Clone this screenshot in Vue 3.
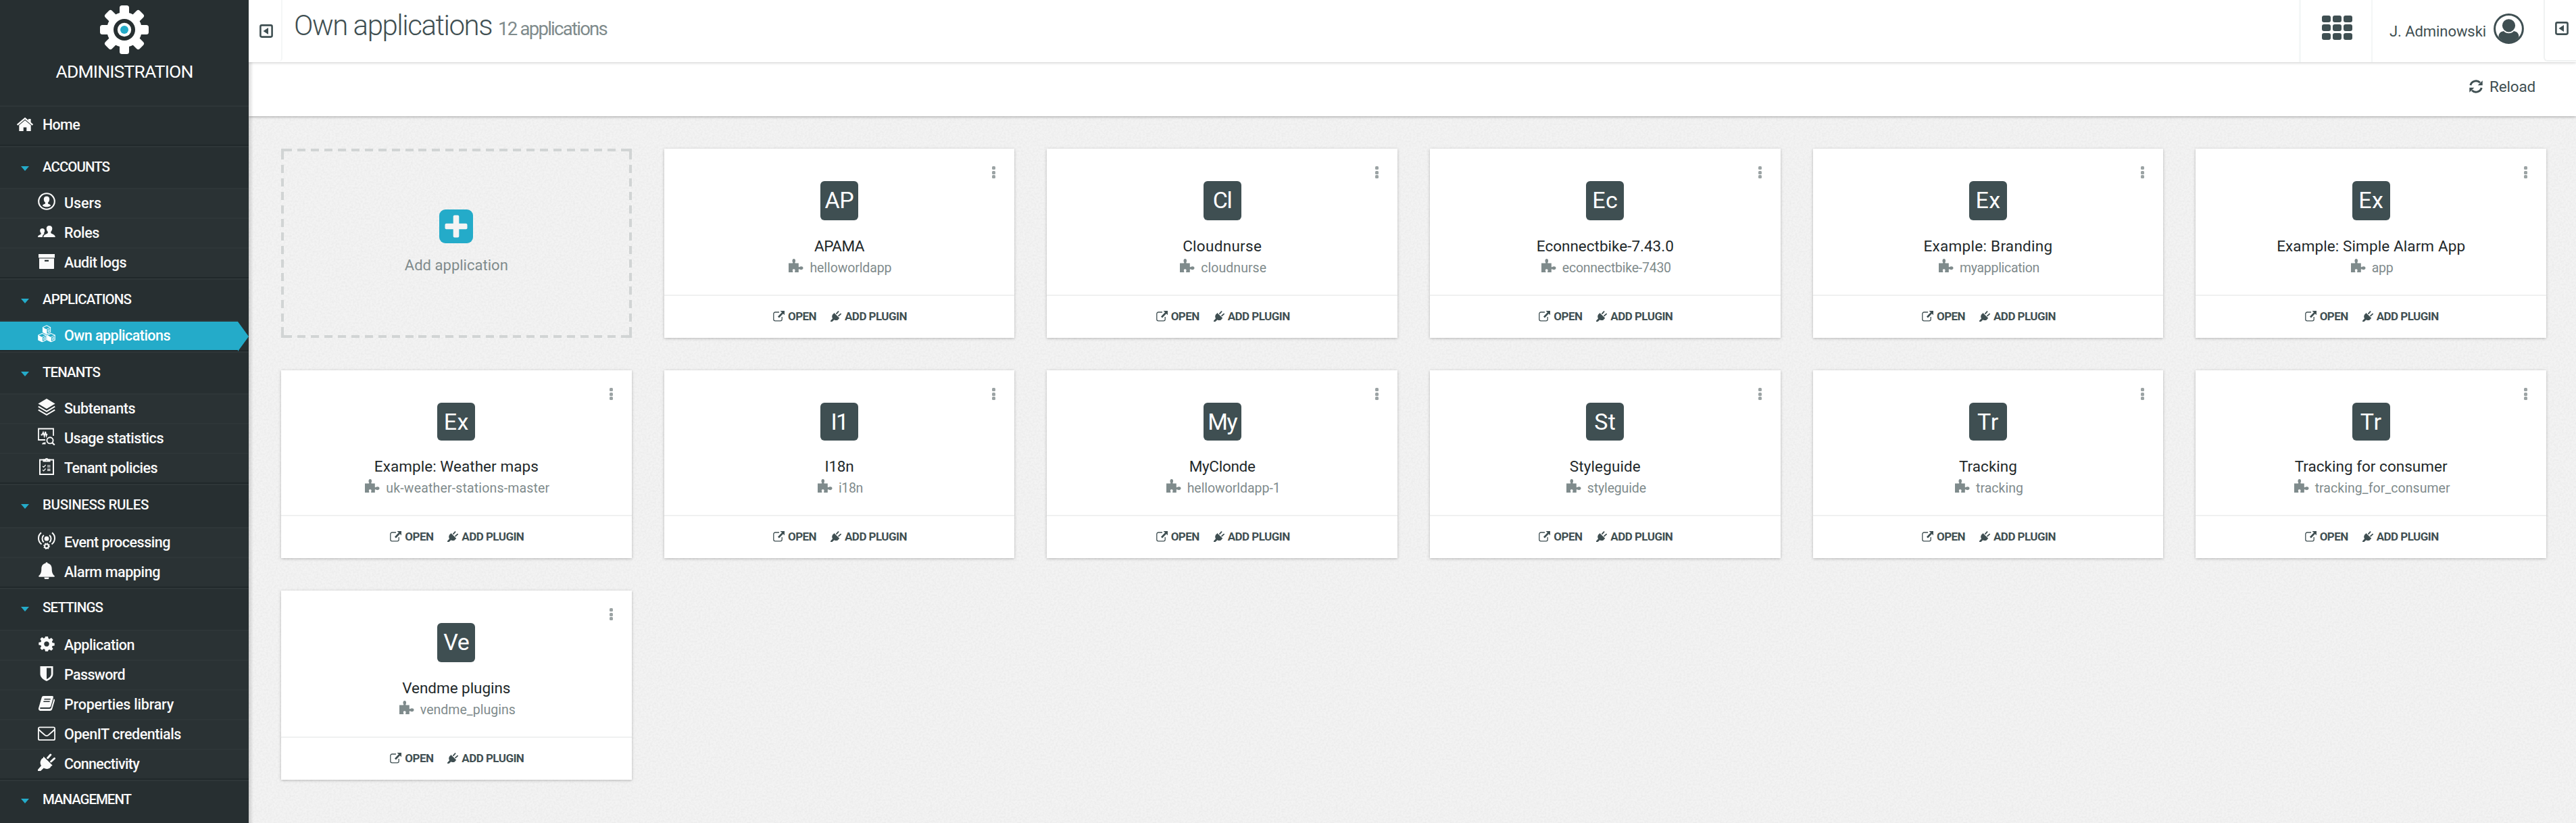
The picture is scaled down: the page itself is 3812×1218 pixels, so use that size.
<script setup>
const vFit = {
  mounted(el, { value }) {
    const natural = el.getBoundingClientRect().width
    const gaps = el.textContent.trim().length
    el.style.letterSpacing = (value - natural) / gaps + 'px'
  },
}

const sections = [
  {
    title: 'ACCOUNTS', width: 99,
    items: [
      { label: 'Users', icon: 'user', width: 55 },
      { label: 'Roles', icon: 'roles', width: 52 },
      { label: 'Audit logs', icon: 'archive', width: 92 },
    ],
  },
  { title: 'APPLICATIONS', width: 131, items: [{ label: 'Own applications', icon: 'cubes', width: 157, active: true }] },
  {
    title: 'TENANTS', width: 85,
    items: [
      { label: 'Subtenants', icon: 'layers', width: 105 },
      { label: 'Usage statistics', icon: 'stats', width: 147 },
      { label: 'Tenant policies', icon: 'policies', width: 138 },
    ],
  },
  {
    title: 'BUSINESS RULES', width: 157, tall: true,
    items: [
      { label: 'Event processing', icon: 'event', width: 157 },
      { label: 'Alarm mapping', icon: 'bell', width: 142 },
    ],
  },
  {
    title: 'SETTINGS', width: 89, raised: true,
    items: [
      { label: 'Application', icon: 'gear', width: 104 },
      { label: 'Password', icon: 'shield', width: 90 },
      { label: 'Properties library', icon: 'book', width: 162 },
      { label: 'OpenIT credentials', icon: 'mail', width: 173 },
      { label: 'Connectivity', icon: 'plug', width: 111 },
    ],
  },
  { title: 'MANAGEMENT', width: 131, raised: true, items: [] },
]

const apps = [
  { short: 'AP', sw: 43, name: 'APAMA', nw: 74, path: 'helloworldapp', pw: 121 },
  { short: 'Cl', sw: 28, name: 'Cloudnurse', nw: 117, path: 'cloudnurse', pw: 97 },
  { short: 'Ec', sw: 38, name: 'Econnectbike-7.43.0', nw: 203, path: 'econnectbike-7430', pw: 161 },
  { short: 'Ex', sw: 37, name: 'Example: Branding', nw: 191, path: 'myapplication', pw: 118 },
  { short: 'Ex', sw: 37, name: 'Example: Simple Alarm App', nw: 279, path: 'app', pw: 32 },
  { short: 'Ex', sw: 37, name: 'Example: Weather maps', nw: 243, path: 'uk-weather-stations-master', pw: 242 },
  { short: 'I1', sw: 25, name: 'I18n', nw: 43, path: 'i18n', pw: 36 },
  { short: 'My', sw: 43, name: 'MyClonde', nw: 98, path: 'helloworldapp-1', pw: 138 },
  { short: 'St', sw: 32, name: 'Styleguide', nw: 105, path: 'styleguide', pw: 87 },
  { short: 'Tr', sw: 32, name: 'Tracking', nw: 86, path: 'tracking', pw: 70 },
  { short: 'Tr', sw: 32, name: 'Tracking for consumer', nw: 226, path: 'tracking_for_consumer', pw: 200 },
  { short: 'Ve', sw: 38, name: 'Vendme plugins', nw: 160, path: 'vendme_plugins', pw: 141 },
]
</script>

<template>
  <div class="page">
    <svg class="defs" width="0" height="0">
      <symbol id="home" viewBox="0 0 26 26">
        <path d="M1.6 13.8 13 4.2l11.4 9.6" fill="none" stroke="currentColor" stroke-width="2.4" />
        <path d="M18 5h3.600v7L18 8.600zM4.300 14.200 13 7l8.700 7.200V23h-6.400v-5.600h-4.600V23H4.300z" fill="currentColor" />
      </symbol>
      <symbol id="user" viewBox="0 0 26 26">
        <circle cx="13" cy="13" r="11.8" fill="none" stroke="currentColor" stroke-width="2.100" />
        <path d="M13 5.500c-2.900 0-4.400 1.900-4.200 4.600.1 2.300 1 3.900 2.200 4.700v1.400c-.3 1-3.900.8-4 3.300 1.300 1.200 3.400 1.800 6 1.800s4.700-.6 6-1.800c-.1-2.500-3.700-2.300-4-3.300v-1.400c1.200-.8 2.100-2.400 2.200-4.700.2-2.700-1.300-4.600-4.200-4.600z" fill="currentColor" />
      </symbol>
      <symbol id="roles" viewBox="0 0 26 26">
        <path d="M17 5c-2.900 0-4.300 1.700-4.200 4.300.1 2 .9 3.600 2 4.600v1.500C14.300 17.600 8.400 17 8.300 22h17.500c-.1-5-6-4.400-6.500-6.600v-1.500c1.100-1 1.900-2.600 2-4.600C21.400 6.700 19.900 5 17 5z" fill="currentColor" />
        <path d="M6.600 9c-2.300 0-3.500 1.400-3.400 3.500.1 1.500.6 2.700 1.500 3.500v1.200C4 18.800 0 18.400 0 22h6.700c.1-2.600 1.500-4.100 3.300-5-.9-.3-1.100-.6-1.200-1 1-1 1.300-2 1.300-3.500C10.200 10.400 8.900 9 6.600 9z" fill="currentColor" />
      </symbol>
      <symbol id="archive" viewBox="0 0 26 26">
        <path d="M1 3h24v5.500H1zM2 9.600h22v14.600a.8.8 0 0 1-.8.8H2.800a.8.8 0 0 1-.8-.8zm8 2.200v2.100h6v-2.100z" fill="currentColor" fill-rule="evenodd" />
      </symbol>
      <symbol id="cube" viewBox="0 0 13 14">
        <path d="M6.500.8 12.200 3.500v7L6.500 13.400.8 10.500v-7z" fill="none" stroke="currentColor" stroke-width="1.100" />
        <path d="M.8 3.500 6.500 6.400v7L.8 10.500z" fill="currentColor" />
        <path d="M6.500 6.400 12.200 3.500M6.500 6.400v7M8.600 7.600l2-1v2.600l-2 1z" fill="none" stroke="currentColor" stroke-width=".9" />
      </symbol>
      <symbol id="cubes" viewBox="0 0 26 26">
        <use href="#cube" x="6.500" y="0" width="13" height="14" />
        <use href="#cube" x="0" y="11.600" width="13" height="14" />
        <use href="#cube" x="13" y="11.600" width="13" height="14" />
      </symbol>
      <symbol id="layers" viewBox="0 0 26 26">
        <path d="M13 1 25.600 8.500 13 16 .4 8.500z" fill="currentColor" />
        <path d="M.8 12.600 13 19.800l12.200-7.200M.8 17.600 13 24.800l12.200-7.200" fill="none" stroke="currentColor" stroke-width="2" />
      </symbol>
      <symbol id="stats" viewBox="0 0 26 26">
        <path d="M23 12V1.500H1V18h10M4.500 10.500h1.800l1.600-3.500 1.700 5.500 1.600-6.500L12.600 12l1-3" fill="none" stroke="currentColor" stroke-width="1.800" />
        <path d="M6 24.500c.3-2 2-3 5.500-3V24.500z" fill="currentColor" />
        <circle cx="18" cy="18.800" r="4.600" fill="none" stroke="currentColor" stroke-width="1.900" />
        <path d="m21.300 22.200 3.500 3.400" stroke="currentColor" stroke-width="2.200" />
      </symbol>
      <symbol id="policies" viewBox="0 0 26 26">
        <path d="M3 3.500h20v21.600H3z" fill="none" stroke="currentColor" stroke-width="2" />
        <path d="M7.500 2.500h2.800C11 .4 15 .4 15.700 2.500h2.800v4h-11zM13 2.400a1.300 1.300 0 1 0 .01 0z" fill="currentColor" fill-rule="evenodd" />
        <path d="m7 12.800 1.600 1.600 3-3.400M7 18.300l1.600 1.600 3-3.400M14 12h4.500M14 14h4.500M14 17.400h4.500M14 19.400h4.500" fill="none" stroke="currentColor" stroke-width="1.200" />
      </symbol>
      <symbol id="event" viewBox="0 0 26 26">
        <circle cx="13" cy="10.200" r="3.400" fill="currentColor" />
        <path d="M8.800 15.500a7.200 7.200 0 0 1 0-10.600M17.200 15.500a7.200 7.200 0 0 0 0-10.600M5.500 18.500C-.6 13.500-.2 5.600 5 1.400M20.500 18.500c6.100-5 5.700-12.900.5-17.100" fill="none" stroke="currentColor" stroke-width="2" />
        <circle cx="13" cy="21.200" r="2.900" fill="none" stroke="currentColor" stroke-width="2" />
        <circle cx="13" cy="21.200" r="4.300" fill="none" stroke="currentColor" stroke-width="1.200" stroke-dasharray="1.700 1.680" />
      </symbol>
      <symbol id="bell" viewBox="0 0 26 26">
        <path d="M11.500 2.600a1.500 1.500 0 0 1 3 0c4.300 1 6.200 4.300 6.200 8.400 0 5.500 1.600 8.300 4.300 10.600 0 .8-.6 1.200-1.200 1.200H2.200c-.6 0-1.200-.4-1.200-1.200C3.700 19.300 5.300 16.500 5.300 11c0-4.100 1.900-7.400 6.200-8.400zM9.500 23.600h7a3.500 3.500 0 0 1-7 0z" fill="currentColor" />
      </symbol>
      <symbol id="gear" viewBox="0 0 26 26">
        <path fill="currentColor" fill-rule="evenodd" d="M11 3h4l.6 3.100 1.600.7 2.700-1.700 2.700 2.700-1.700 2.700.7 1.700 3.100.6v3.600l-3.100.6-.7 1.700 1.700 2.600-2.700 2.700-2.700-1.700-1.600.7L15 25h-4l-.6-3-1.700-.7L6.100 23l-2.700-2.700 1.700-2.600-.7-1.700-3.100-.6v-3.600l3.100-.6.7-1.700-1.700-2.700 2.700-2.700 2.600 1.700 1.700-.7zm2 7.200a3.800 3.800 0 1 0 .01 0z" />
      </symbol>
      <symbol id="shield" viewBox="0 0 26 26">
        <path fill="currentColor" fill-rule="evenodd" d="M3.500 3h19v11.500c0 5-5 8.800-9.500 10.500-4.500-1.700-9.500-5.500-9.500-10.500zM13 5.600v16.500c3.500-1.700 6.700-4.300 6.700-7.600V5.600z" />
      </symbol>
      <symbol id="book" viewBox="0 0 26 26">
        <path fill="currentColor" fill-rule="evenodd" d="M8.500 3h12.700c1.400 0 2 .9 1.700 2L19.300 18c-.4 1.300-1.200 1.900-2.600 1.900H4.300c-1.300 0-1.900 1.400-.4 2h13.600c1.300 0 1.900-.5 2.300-1.600L23.600 7.300c1.300.4 1.700 1.400 1.300 2.700l-3.700 12.500c-.4 1.600-1.700 2.500-3.300 2.500H4.200C1.700 25 .4 22.800 1.200 20.500L5.700 5.300C6.200 3.700 7 3 8.500 3zm1.200 4-.5 1.500h9.300L19 7zm-1.100 3.400-.5 1.500h9.300l.5-1.500z" />
      </symbol>
      <symbol id="mail" viewBox="0 0 26 26">
        <rect x=".9" y="5.400" width="24.200" height="18.800" rx="2" fill="none" stroke="currentColor" stroke-width="1.800" />
        <path d="M1 8.500c3 3 6 5.500 9 8.100 2 1.700 4 1.700 6 0 3-2.600 6-5.100 9-8.100" fill="none" stroke="currentColor" stroke-width="1.800" />
      </symbol>
      <symbol id="plug" viewBox="0 0 26 26">
        <path d="M14.600 6.700 18.800 2M19.600 12l4.900-4.500" stroke="currentColor" stroke-width="3" stroke-linecap="round" />
        <path d="M8.600 4.800 21.500 17.600c-.5 1-1 1.300-2 1.300-.6 2.300-2.900 3.800-5.700 4-1.800.1-3.400-.3-4.900-1.400L3 27H0v-3l5-5.700C3.300 15.800 3.200 12.800 4.500 10.200 5.300 8.500 6.400 7.300 8 6.700c-.1-.9.1-1.400.6-1.900z" fill="currentColor" />
      </symbol>
      <symbol id="puzzle" viewBox="0 0 22 20">
        <path fill="currentColor" d="M0 6.500h5.600c.8 0 .9-.6.5-1.200C5 3.500 5.300 0 7.800 0s2.800 3.500 1.700 5.300c-.4.6-.3 1.200.5 1.200h4.800v5c0 .9.6 1.100 1.300.6 2-1.300 5.400-1 5.400 1.700s-3.400 3-5.400 1.700c-.7-.5-1.300-.3-1.300.6v3.900H9.700c-.8 0-.8-.6-.5-1.200.7-1.700.5-3.500-1.500-3.500s-2.200 1.800-1.400 3.500c.3.600.2 1.200-.6 1.200H0z" />
      </symbol>
      <symbol id="external" viewBox="0 0 17 16">
        <path d="M9 2H3.200A2.400 2.400 0 0 0 .8 4.400v8a2.400 2.400 0 0 0 2.400 2.400h7.600a2.400 2.400 0 0 0 2.400-2.400V9" fill="none" stroke="currentColor" stroke-width="1.300" />
        <path d="M10.500 0H17v6.200l-2.100-2-6 6.200-1.900-1.900 6-6.200z" fill="currentColor" />
      </symbol>
      <symbol id="collapse" viewBox="0 0 20 20">
        <rect x="1.400" y="1.400" width="17.200" height="17.200" rx="2" fill="none" stroke="currentColor" stroke-width="2.600" />
        <path d="M13 5v10l-7.500-5z" fill="currentColor" />
      </symbol>
      <symbol id="reload" viewBox="0 0 20 20">
        <path d="M1.800 8.200A8.500 8.500 0 0 1 16 4.300M18.200 11.800A8.500 8.500 0 0 1 4 15.700" fill="none" stroke="currentColor" stroke-width="3" />
        <path d="M19.700 1.300v6.900h-7zM.3 18.700v-6.900h7z" fill="currentColor" />
      </symbol>
    </svg>

    <aside class="sidebar">
      <div class="brand">
        <svg class="brand-icon" viewBox="0 0 72 72">
          <g fill="#fff">
            <rect v-for="a in [0, 45, 90, 135]" :key="a" x="29" y="0" width="14" height="72" rx="3.500" :transform="`rotate(${a} 36 36)`" />
            <circle cx="36" cy="36" r="26" />
          </g>
          <circle cx="36" cy="36" r="16" fill="#272f31" />
          <circle cx="36" cy="36" r="10.200" fill="#fff" />
          <circle cx="36" cy="36" r="6" fill="#24abc9" />
        </svg>
        <div class="brand-name"><span v-fit="203">ADMINISTRATION</span></div>
      </div>
      <div class="home-row">
        <svg class="icon"><use href="#home" /></svg>
        <span v-fit="55">Home</span>
      </div>
      <section v-for="s in sections" :key="s.title" class="section">
        <div class="section-head" :class="{ tall: s.tall, raised: s.raised }">
          <i class="caret"></i><span v-fit="s.width">{{ s.title }}</span>
        </div>
        <div v-for="it in s.items" :key="it.label" class="item" :class="{ active: it.active }">
          <svg class="icon"><use :href="'#' + it.icon" /></svg>
          <span v-fit="it.width">{{ it.label }}</span>
        </div>
      </section>
    </aside>

    <main class="main">
      <header class="topbar">
        <div class="toggle left"><svg class="toggle-icon"><use href="#collapse" /></svg></div>
        <h1 class="title"><span v-fit="293">Own applications</span></h1>
        <div class="count"><span v-fit="161">12 applications</span></div>
        <div class="switcher"><div class="dots"><i v-for="n in 9" :key="n"></i></div></div>
        <div class="account">
          <span v-fit="143">J. Adminowski</span>
          <svg class="avatar" viewBox="0 0 45 45">
            <circle cx="22.500" cy="22.500" r="20.900" fill="none" stroke="currentColor" stroke-width="3" />
            <circle cx="22.500" cy="17.800" r="9.600" fill="currentColor" />
            <path d="M7.500 34.500c0-4.500 2.500-7.800 7.500-8.500 2 2.200 4.600 3.200 7.500 3.200s5.500-1 7.500-3.200c5 .7 7.500 4 7.500 8.500-3.500 5.500-9 8.300-15 8.300s-11.500-2.800-15-8.300z" fill="currentColor" />
          </svg>
        </div>
        <div class="toggle right"><svg class="toggle-icon"><use href="#collapse" /></svg></div>
      </header>
      <div class="actionbar">
        <svg class="reload-icon"><use href="#reload" /></svg>
        <span v-fit="68">Reload</span>
      </div>

      <div class="grid">
        <div class="add-card">
          <svg class="plus" viewBox="0 0 50 50">
            <rect width="50" height="50" rx="9" fill="#24abc9" />
            <rect x="20.700" y="8.500" width="8.600" height="33" rx="2" fill="#f4f4f4" />
            <rect x="8.500" y="20.700" width="33" height="8.600" rx="2" fill="#f4f4f4" />
          </svg>
          <div class="add-label"><span v-fit="153">Add application</span></div>
        </div>
        <article v-for="app in apps" :key="app.name" class="card">
          <div class="kebab"><i></i><i></i><i></i></div>
          <div class="card-body">
            <div class="tile"><span v-fit="app.sw">{{ app.short }}</span></div>
            <div class="name"><span v-fit="app.nw">{{ app.name }}</span></div>
            <div class="path">
              <svg class="puzzle"><use href="#puzzle" /></svg>
              <span v-fit="app.pw">{{ app.path }}</span>
            </div>
          </div>
          <footer class="card-foot">
            <svg class="ext"><use href="#external" /></svg>
            <span class="open" v-fit="42">OPEN</span>
            <svg class="plug"><use href="#plug" /></svg>
            <span v-fit="92">ADD PLUGIN</span>
          </footer>
        </article>
      </div>
    </main>
  </div>
</template>

<style>
body {
  overflow: hidden;
}
</style>

<style scoped>
.page {
  display: flex;
  width: 3812px;
  height: 1218px;
  overflow: hidden;
  font-family: Roboto, "Liberation Sans", sans-serif;
  color: #3f4f52;
  background: #f3f3f3
    url("data:image/svg+xml,%3Csvg xmlns='http://www.w3.org/2000/svg' width='200' height='200'%3E%3Cfilter id='n'%3E%3CfeTurbulence type='fractalNoise' baseFrequency='.35' numOctaves='2' stitchTiles='stitch'/%3E%3CfeColorMatrix values='0 0 0 0 0 0 0 0 0 0 0 0 0 0 0 .06 0 0 0 -.02'/%3E%3C/filter%3E%3Crect width='200' height='200' filter='url(%23n)'/%3E%3C/svg%3E");
}
.page span {
  white-space: nowrap;
}
.defs {
  position: absolute;
}

/* Sidebar */
.sidebar {
  position: relative;
  z-index: 2;
  flex: none;
  width: 368px;
  height: 1218px;
  overflow: hidden;
  background: #272f31;
  color: #fafafa;
}
.brand {
  box-sizing: border-box;
  height: 156px;
  padding-top: 8px;
  text-align: center;
}
.brand-icon {
  display: block;
  width: 72px;
  height: 72px;
  margin: 0 auto;
}
.brand-name {
  margin-top: 9px;
  font-size: 26.500px;
  line-height: 33px;
  color: #fff;
}
.home-row {
  box-sizing: border-box;
  display: flex;
  align-items: center;
  height: 58px;
  padding: 0 0 2px 24px;
  border-top: 2px solid #2e3638;
  font-size: 21.500px;
  font-weight: 500;
  line-height: 52px;
}
.icon {
  flex: none;
  width: 26px;
  height: 26px;
}
.home-row .icon {
  margin: -3px 13px 0 0;
}
.section-head {
  box-sizing: border-box;
  display: flex;
  align-items: center;
  height: 64px;
  padding: 0 0 0 31px;
  border-top: 2px solid #20282a;
  box-shadow: inset 0 2px #2e3638;
  font-size: 20.500px;
  font-weight: 500;
  line-height: 60px;
}
.section-head.tall {
  height: 66px;
  padding-bottom: 2px;
}
.section-head.raised {
  padding-bottom: 4px;
  line-height: 58px;
}
.caret {
  width: 0;
  height: 0;
  margin: 4px 20px 0 0;
  border: 6px solid transparent;
  border-top: 7px solid #24abc9;
  border-bottom: 0;
}
.item {
  box-sizing: border-box;
  display: flex;
  align-items: flex-start;
  height: 44px;
  padding: 5px 0 0 56px;
  border-top: 2px solid #2e3638;
  background: #2a3234;
  font-size: 21.500px;
  font-weight: 500;
  line-height: 32px;
}
.item .icon {
  margin-right: 13px;
}
.item.active {
  position: relative;
  margin-right: 16px;
  background: #24abc9;
  background-clip: padding-box;
  color: #fff;
}
.item.active::after {
  content: "";
  position: absolute;
  left: 100%;
  top: 0;
  width: 16px;
  height: 44px;
  background: #24abc9;
  clip-path: polygon(0 0, 100% 50%, 0 100%);
}

/* Header */
.main {
  position: relative;
  flex: 1;
  min-width: 0;
}
.main::before {
  content: "";
  position: absolute;
  z-index: 1;
  left: 0;
  top: 92px;
  width: 7px;
  height: 1126px;
  background: linear-gradient(90deg, rgba(0, 0, 0, 0.15), rgba(0, 0, 0, 0));
}
.topbar {
  position: relative;
  z-index: 1;
  display: flex;
  height: 92px;
  background: #fff;
  box-shadow: 0 1px 4px rgba(0, 0, 0, 0.2);
}
.toggle {
  box-sizing: border-box;
  width: 50px;
  height: 91px;
  color: #3f4f52;
}
.toggle.left {
  padding: 36px 0 0 16px;
  border-right: 2px solid #f4f6f6;
  border-bottom-right-radius: 5px;
}
.toggle.right {
  width: 48px;
  padding: 32px 0 0 15px;
  border-left: 2px solid #f0f2f2;
  border-bottom: 2px solid #f0f2f2;
  border-bottom-left-radius: 6px;
}
.toggle-icon {
  display: block;
  width: 20px;
  height: 20px;
}
.title {
  margin: 0 0 0 17px;
  font-size: 42px;
  font-weight: 300;
  line-height: 76px;
}
.count {
  margin: 0 auto 0 9px;
  font-size: 27.500px;
  line-height: 85px;
  color: #7f8b8c;
}
.switcher {
  box-sizing: border-box;
  width: 107px;
  padding: 22.500px 0 0 31px;
  border-left: 3px solid #f4f7f7;
}
.dots {
  display: grid;
  grid-template-columns: repeat(3, 13px);
  gap: 3px;
}
.dots i {
  height: 10px;
  border-radius: 3px;
  background: #3f4f52;
}
.account {
  box-sizing: border-box;
  display: flex;
  width: 255px;
  padding-left: 25px;
  border-left: 2px solid #f4f6f6;
  font-size: 22px;
  line-height: 93px;
}
.avatar {
  width: 45px;
  height: 45px;
  margin: 19.500px 0 0 11px;
}
.actionbar {
  display: flex;
  justify-content: flex-end;
  height: 80px;
  padding-right: 60px;
  background: #fff;
  box-shadow: 0 1px 4px rgba(0, 0, 0, 0.32);
  font-size: 22.500px;
  line-height: 73px;
}
.reload-icon {
  width: 20px;
  height: 20px;
  margin: 26px 10px 0 0;
}

/* Cards */
.grid {
  display: grid;
  grid-template-columns: repeat(6, 1fr);
  grid-template-rows: 280px 278px 280px;
  gap: 48px;
  margin: 48px 44px 0 48px;
}
.add-card {
  --dash: #d1d4d4;
  --row: repeating-linear-gradient(90deg, var(--dash) 0 12px, transparent 12px 19.947px);
  --col: repeating-linear-gradient(180deg, var(--dash) 0 12px, transparent 12px 20px);
  --dot: linear-gradient(var(--dash), var(--dash));
  padding-top: 90px;
  text-align: center;
  color: #7f8b8c;
  background:
    var(--row) center top / calc(100% - 8px) 4px no-repeat,
    var(--row) center bottom / calc(100% - 8px) 4px no-repeat,
    var(--col) left center / 4px calc(100% - 8px) no-repeat,
    var(--col) right center / 4px calc(100% - 8px) no-repeat,
    var(--dot) left top / 4px 4px no-repeat,
    var(--dot) right top / 4px 4px no-repeat,
    var(--dot) left bottom / 4px 4px no-repeat,
    var(--dot) right bottom / 4px 4px no-repeat;
}
.plus {
  display: block;
  width: 50px;
  height: 50px;
  margin: 0 auto;
}
.add-label {
  margin-top: 17px;
  font-size: 22px;
  line-height: 31px;
}
.card {
  position: relative;
  display: flex;
  flex-direction: column;
  background: #fff;
  box-shadow: 0 1px 4px rgba(0, 0, 0, 0.25);
}
.kebab {
  position: absolute;
  right: 28px;
  top: 26px;
  display: grid;
  gap: 1.500px;
}
.kebab i {
  width: 5px;
  height: 5px;
  border-radius: 1.500px;
  background: #9ba3a4;
}
.card-body {
  flex: 1;
  display: flex;
  flex-direction: column;
  align-items: center;
  padding-top: 48px;
}
.tile {
  flex: 1;
  width: 56px;
  margin-bottom: 22px;
  border-radius: 6px;
  background: #3f4f52;
  color: #fff;
  font-size: 34px;
  line-height: 56px;
  text-align: center;
}
.name {
  height: 34px;
  font-size: 22.500px;
  line-height: 32px;
  color: #22282a;
}
.path {
  display: flex;
  height: 54px;
  padding-left: 3px;
  font-size: 19.500px;
  line-height: 29px;
  color: #7f8b8c;
}
.puzzle {
  width: 22px;
  height: 20px;
  margin: 1px 9px 0 0;
}
.card-foot {
  box-sizing: border-box;
  display: flex;
  justify-content: center;
  height: 64px;
  padding-left: 2px;
  border-top: 2px solid #f0f1f1;
  font-size: 17px;
  font-weight: 700;
  line-height: 61px;
}
.ext {
  width: 17px;
  height: 16px;
  margin: 22px 5px 0 0;
}
.open {
  margin-right: 21px;
}
.plug {
  width: 16px;
  height: 16px;
  margin: 22px 5px 0 0;
}
</style>
